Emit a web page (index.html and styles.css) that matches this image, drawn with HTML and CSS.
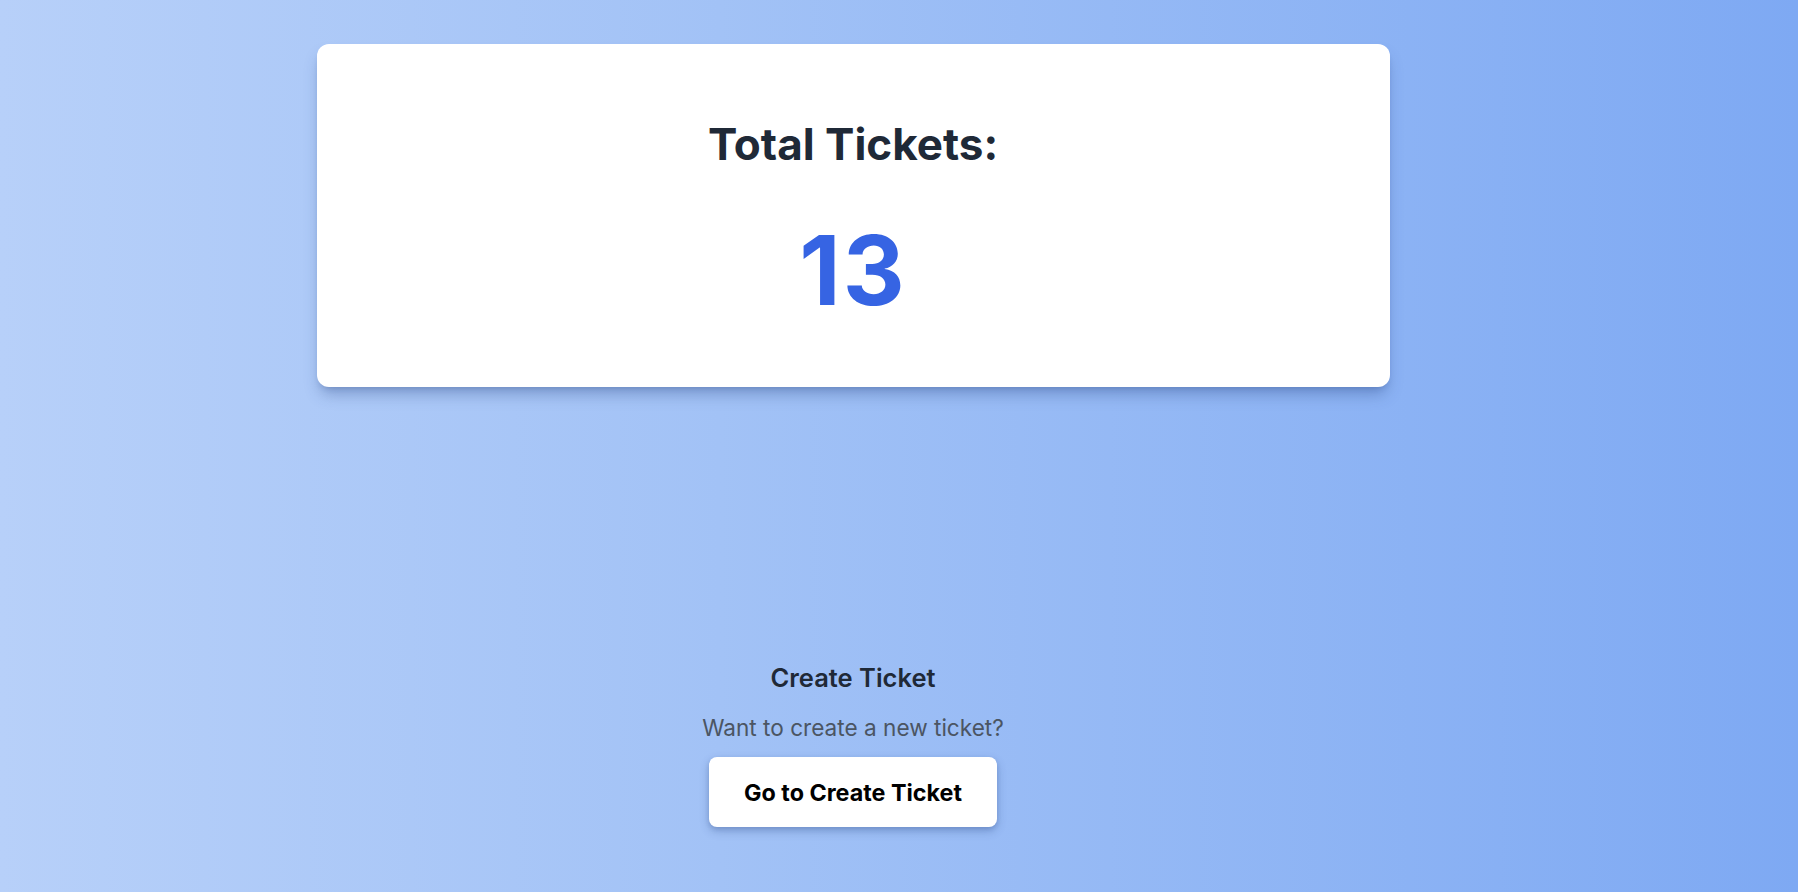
FILE: index.html
```html
<!DOCTYPE html>
<html lang="en">
<head>
<meta charset="utf-8">
<title>Tickets</title>
<link rel="stylesheet" href="styles.css">
</head>
<body>
<main class="page">
  <div class="column">
    <section class="card">
      <h1 class="card-title">Total Tickets:</h1>
      <p class="card-count">13</p>
    </section>
    <section class="create">
      <h2 class="create-title">Create Ticket</h2>
      <p class="create-text">Want to create a new ticket?</p>
      <button class="create-btn" type="button">Go to Create Ticket</button>
    </section>
  </div>
</main>
</body>
</html>
```

FILE: styles.css
```css
* { box-sizing: border-box; }
html, body { margin: 0; padding: 0; height: 100%; }
body {
  font-family: Inter, "Noto Sans", "Liberation Sans", sans-serif;
  background: linear-gradient(to right, #b7d0f9 0%, #a2c2f6 40%, #7ea9f3 100%);
  min-height: 892px;
}
.page {
  display: flex;
  justify-content: center;
  padding: 44px 92px 0 0;
}
.column {
  width: 1073px;
  display: flex;
  flex-direction: column;
  align-items: center;
}
.card {
  width: 100%;
  height: 343px;
  background: #ffffff;
  border-radius: 12px;
  box-shadow: 0 10px 15px -3px rgba(40, 70, 130, 0.35), 0 4px 6px -4px rgba(40, 70, 130, 0.3);
  display: flex;
  flex-direction: column;
  align-items: center;
  padding-top: 74px;
}
.card-title {
  margin: 0;
  font-size: 44px;
  line-height: 52px;
  font-weight: 700;
  color: #1f2937;
  letter-spacing: 0;
}
.card-count {
  margin: 52px 0 0;
  font-size: 96px;
  line-height: 96px;
  font-weight: 700;
  color: #3664e3;
  letter-spacing: 2px;
}
.create {
  margin-top: 275px;
  display: flex;
  flex-direction: column;
  align-items: center;
}
.create-title {
  margin: 0;
  font-size: 25.5px;
  line-height: 32px;
  font-weight: 600;
  color: #1f2937;
}
.create-text {
  margin: 19px 0 0;
  font-size: 22.6px;
  line-height: 30px;
  font-weight: 400;
  color: #4b5563;
}
.create-btn {
  margin-top: 14px;
  height: 70px;
  padding: 0 35px;
  border: none;
  border-radius: 8px;
  background: #ffffff;
  font-family: inherit;
  font-size: 23.3px;
  font-weight: 700;
  color: #000000;
  box-shadow: 0 4px 10px rgba(40, 70, 130, 0.3), 0 2px 4px rgba(40, 70, 130, 0.15);
  cursor: pointer;
}
```
